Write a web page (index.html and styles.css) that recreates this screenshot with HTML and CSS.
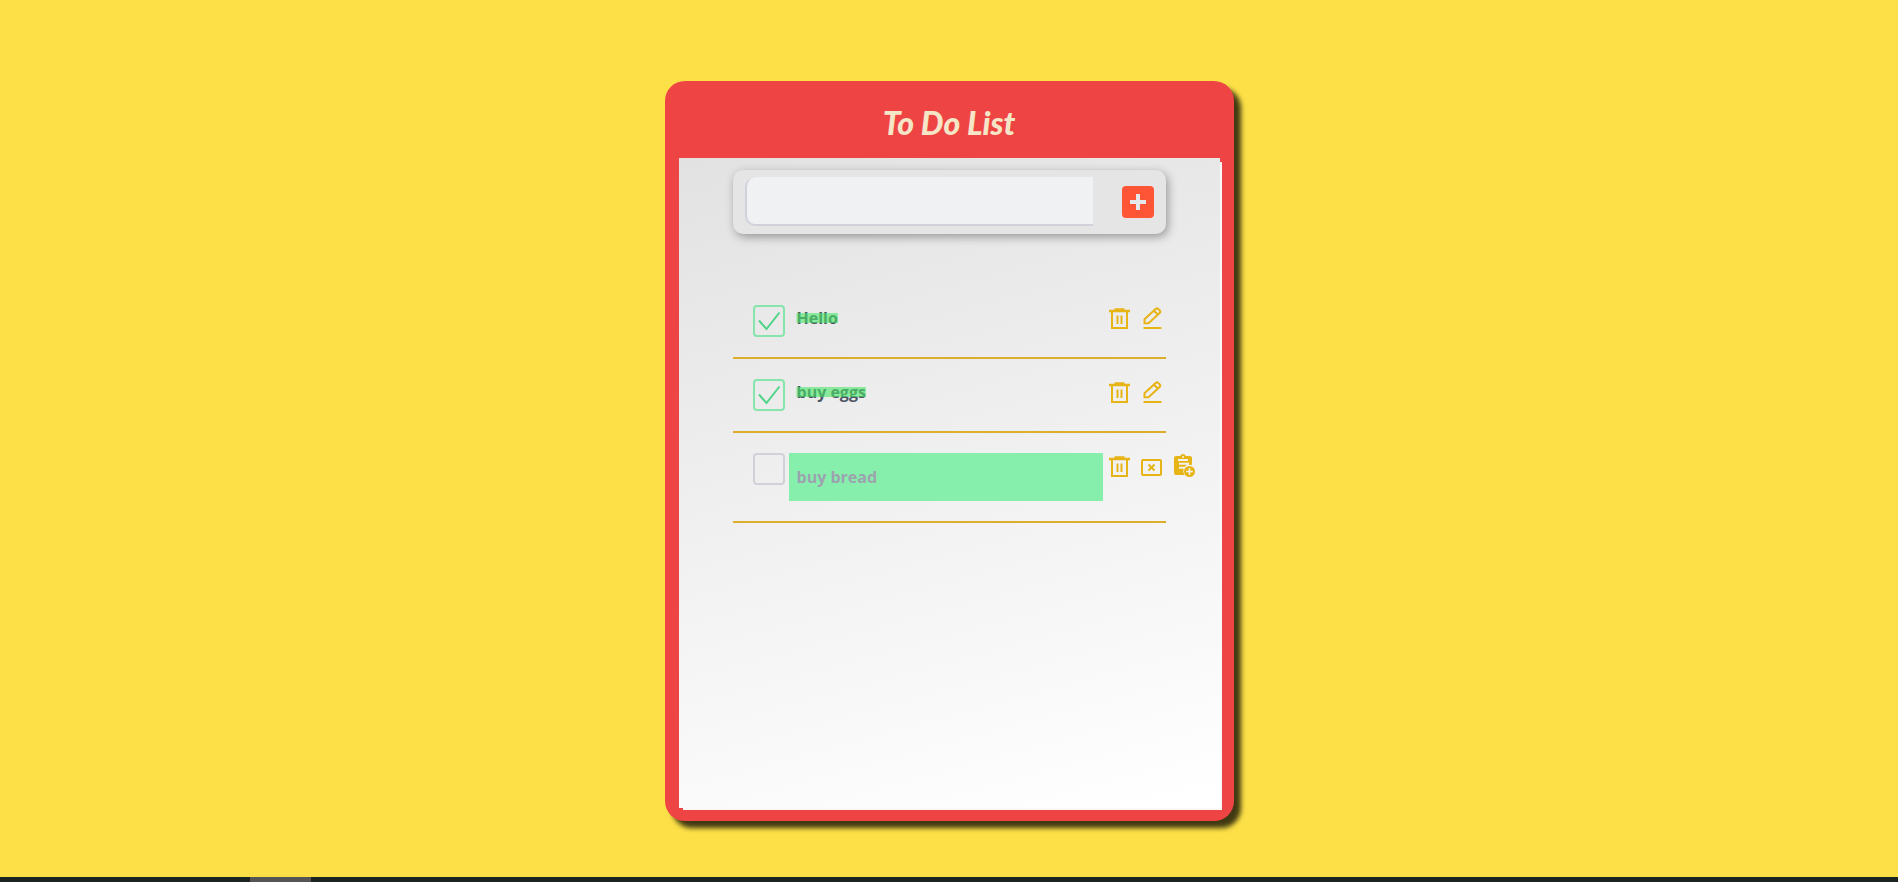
FILE: index.html
```html
<!DOCTYPE html>
<html lang="en">
<head>
<meta charset="utf-8">
<title>To Do List</title>
<link rel="stylesheet" href="styles.css">
</head>
<body>
<svg class="sprite" aria-hidden="true">
  <symbol id="trash" viewBox="0 0 24 24">
    <path d="M1 6h21M6.500 4.300h10" fill="none" stroke="currentColor" stroke-width="2.300"/>
    <path d="M4 6v17h15V6M9.500 10.500v8.500M13.500 10.500v8.500" fill="none" stroke="currentColor" stroke-width="2"/>
  </symbol>
  <symbol id="edit" viewBox="0 0 24 24">
    <path d="M4.500 18.300v-4L15.600 4.100a2 2 0 0 1 2.800 0l1.200 1.200a2 2 0 0 1 0 2.800L8.500 18.300zM14 5.700l4 4M3.500 23h18" fill="none" stroke="currentColor" stroke-width="2"/>
  </symbol>
  <symbol id="cancel" viewBox="0 0 24 24">
    <rect x="2" y="7" width="19" height="15" rx="1" fill="none" stroke="currentColor" stroke-width="2"/>
    <path d="M8.500 11.500l6 6m0-6l-6 6" fill="none" stroke="currentColor" stroke-width="2"/>
  </symbol>
  <symbol id="save" viewBox="0 0 24 24">
    <path fill="currentColor" fill-rule="evenodd" d="M17 12.100V9.800H7v2h8.500a7 7 0 0 0-2.800 2H7v2h4.700a6.500 6.500 0 0 0 .9 6.200H4a2 2 0 0 1-2-2V5a2 2 0 0 1 2-2h4.200a3 3 0 0 1 5.600 0H18a2 2 0 0 1 2 2v6.700a7 7 0 0 0-3 .4zM11 3a1 1 0 1 0 0 2 1 1 0 0 0 0-2zM6 6v2h10V6z"/>
    <path fill="currentColor" fill-rule="evenodd" d="M17.500 13a5.500 5.500 0 1 0 0 11 5.500 5.500 0 0 0 0-11zm-.8 2.200h1.600v2.500h2.500v1.600h-2.500v2.500h-1.600v-2.500h-2.500v-1.600h2.500z"/>
  </symbol>
</svg>
<main class="page">
  <section class="card">
    <h1 class="title">To Do List</h1>
    <div class="panel">
      <form class="add">
        <input class="add-input" type="text" aria-label="New task">
        <button class="add-button" type="button" aria-label="Add task">
          <svg class="plus" viewBox="0 0 16 16"><path d="M6 0h4v6h6v4h-6v6H6v-6H0V6h6z" fill="currentColor"/></svg>
        </button>
      </form>
      <ul class="list">
        <li class="item">
          <input class="check" type="checkbox" id="task1" checked>
          <label class="text done" for="task1">Hello</label>
          <div class="actions">
            <button class="action" type="button" aria-label="Delete"><svg class="icon"><use href="#trash"/></svg></button>
            <button class="action" type="button" aria-label="Edit"><svg class="icon"><use href="#edit"/></svg></button>
          </div>
        </li>
        <li class="item">
          <input class="check" type="checkbox" id="task2" checked>
          <label class="text done" for="task2">buy eggs</label>
          <div class="actions">
            <button class="action" type="button" aria-label="Delete"><svg class="icon"><use href="#trash"/></svg></button>
            <button class="action" type="button" aria-label="Edit"><svg class="icon"><use href="#edit"/></svg></button>
          </div>
        </li>
        <li class="item">
          <input class="check" type="checkbox" aria-label="buy bread">
          <input class="edit-input" type="text" placeholder="buy bread" aria-label="Edit task">
          <div class="actions">
            <button class="action" type="button" aria-label="Delete"><svg class="icon"><use href="#trash"/></svg></button>
            <button class="action" type="button" aria-label="Cancel"><svg class="icon"><use href="#cancel"/></svg></button>
            <button class="action" type="button" aria-label="Save"><svg class="icon"><use href="#save"/></svg></button>
          </div>
        </li>
      </ul>
    </div>
  </section>
</main>
<footer class="bar"><div class="bar-thumb"></div></footer>
</body>
</html>
```
FILE: styles.css
```css
* { box-sizing: border-box; }

body {
  margin: 0;
  min-height: 100vh;
  display: flex;
  flex-direction: column;
  background: #fde047;
  font-family: "Open Sans", "Noto Sans", sans-serif;
}

.sprite { display: none; }

.page {
  flex: 1;
  display: flex;
  justify-content: center;
  align-items: flex-start;
  padding: 81px 0 56px;
}

.card {
  width: 90%;
  max-width: 569px;
  padding: 0 14px 13px;
  border-radius: 20px;
  background: #ef4444;
  box-shadow: 7px 7px 5px rgba(0, 0, 0, 0.75);
}

.title {
  margin: 0;
  padding: 22px 0 15px;
  font: italic 900 32px/40px Lato, sans-serif;
  text-align: center;
  color: #f5e6c8;
}

.panel {
  min-height: 650px;
  padding: 12px 54px;
  background: linear-gradient(165deg, #e2e2e2, #fff 98%);
  box-shadow: 3px 3px 0 -1px #f8f8f8;
}

.add {
  display: flex;
  align-items: center;
  justify-content: space-between;
  padding: 7px 12px 8px;
  border-radius: 10px;
  background: #e5e5e5;
  box-shadow: 2px 3px 10px rgba(0, 0, 0, 0.35);
}

.add-input {
  width: 348px;
  height: 49px;
  border: 0 solid #d1d1db;
  border-width: 0 0 2px 2px;
  border-radius: 10px 0 0 10px;
  padding: 0 12px;
  background: #f0f1f3;
  font: inherit;
}

.add-button {
  display: grid;
  place-items: center;
  width: 32px;
  height: 32px;
  padding: 0;
  border: 0;
  border-radius: 4px;
  background: #ff5537;
  color: #e5e7eb;
}

.plus { width: 16px; height: 16px; }

.list {
  margin: 51px 0 0;
  padding: 0;
  list-style: none;
}

.item {
  display: flex;
  align-items: flex-start;
  padding: 20px 0 20px 20px;
  border-bottom: 2px solid #dcae2b;
}

.check {
  appearance: none;
  flex: none;
  width: 32px;
  height: 32px;
  margin: 0 4px 0 0;
  border: 2px solid #d1d1d9;
  border-radius: 4px;
}

.check:checked {
  border-color: #86e5ac;
  background: url('data:image/svg+xml,<svg xmlns="http://www.w3.org/2000/svg" viewBox="0 0 28 28"><path d="M4 13.500l7.500 8.500L24.500 5.500" fill="none" stroke="%234fd387" stroke-width="2"/></svg>') center / 100%;
}

.text,
.edit-input {
  flex: 1;
  min-width: 0;
  padding: 0 8px;
  font-size: 16px;
  font-weight: 700;
  line-height: 26px;
  color: #4b5563;
}

.done {
  text-decoration: line-through 10px rgba(74, 232, 104, 0.6);
}

.edit-input {
  height: 48px;
  border: 0;
  background: #86efac;
  font-family: inherit;
}

.edit-input::placeholder { color: #9ca3af; opacity: 1; }

.actions {
  display: flex;
  gap: 8px;
  width: 63px;
  padding-left: 5px;
}

.action {
  flex: none;
  width: 24px;
  height: 24px;
  padding: 0;
  border: 0;
  background: none;
  color: #e7b416;
}

.icon { display: block; width: 24px; height: 24px; }

.bar {
  height: 5px;
  padding-left: 250px;
  background: #1c2420;
}

.bar-thumb {
  width: 61px;
  height: 5px;
  background: #555;
}
```
